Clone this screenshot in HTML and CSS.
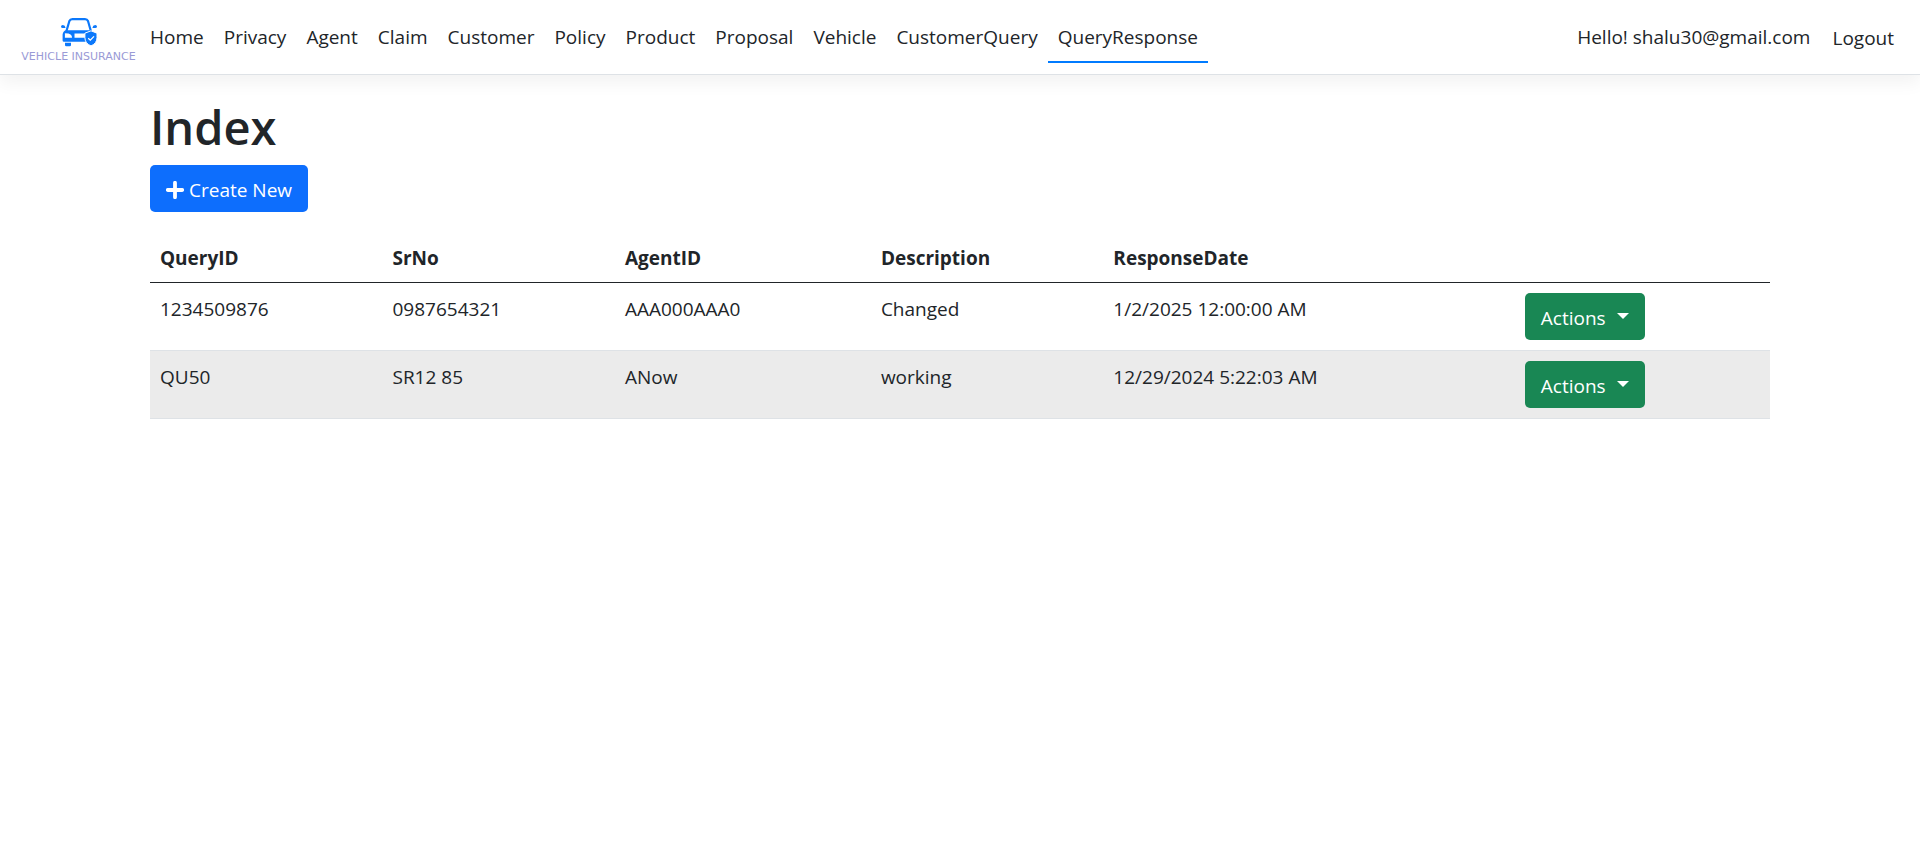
FILE: index.html
```html
<!DOCTYPE html>
<html lang="en">
<head>
<meta charset="utf-8">
<title>Index - Vehicle Insurance</title>
<link rel="stylesheet" href="styles.css">
</head>
<body>
<header class="navbar">
  <a class="brand" href="#">
    <svg class="brand-icon" viewBox="0 0 38 30" aria-hidden="true">
      <path fill="none" stroke="#0b78fb" stroke-width="2.2" stroke-linejoin="round" d="M6.300 14.500 9.400 4Q10.200 2.100 12.400 2.100H25Q27.200 2.100 28 4L31 14.500"/>
      <path fill="#0b78fb" fill-rule="evenodd" d="M6 13.200H31L33 16 27 24.800H4Q2.600 24.800 2.600 23.400V17.500Q3 14 6 13.200ZM4.900 16.200V20.700H12Q12 17.500 8.500 16.500ZM14.500 16.400V20.700H25V16.400Z"/>
      <path fill="#0b78fb" d="M5 25.800H11V28Q11 29.300 9.700 29.300H6.300Q5 29.300 5 28Z"/>
      <path fill="#0b78fb" d="M1 9.500Q1 8 2.800 8 5.200 8.200 5.600 11H2.800Q1 11 1 9.500ZM37 9.500Q37 8 35.200 8 32.800 8.200 32.400 11H35.200Q37 11 37 9.500Z"/>
      <path fill="#0b78fb" stroke="#fff" stroke-width="1" d="M31 13.800 37 16.200V20.500Q37 26.500 31 28.900 24.900 26.500 24.900 20.500V16.200Z"/>
      <path fill="none" stroke="#fff" stroke-width="1.300" d="M28.200 21.300 30.300 23.200 34 19.400"/>
    </svg>
    <span class="brand-name">VEHICLE INSURANCE</span>
  </a>
  <nav class="nav">
    <a class="nav-link" href="#">Home</a>
    <a class="nav-link" href="#">Privacy</a>
    <a class="nav-link" href="#">Agent</a>
    <a class="nav-link" href="#">Claim</a>
    <a class="nav-link" href="#">Customer</a>
    <a class="nav-link" href="#">Policy</a>
    <a class="nav-link" href="#">Product</a>
    <a class="nav-link" href="#">Proposal</a>
    <a class="nav-link" href="#">Vehicle</a>
    <a class="nav-link" href="#">CustomerQuery</a>
    <a class="nav-link active" href="#" aria-current="page">QueryResponse</a>
  </nav>
  <div class="account">
    <a class="nav-link" href="#">Hello! shalu30@gmail.com</a>
    <button class="logout" type="button">Logout</button>
  </div>
</header>
<main class="container">
  <h1 class="title">Index</h1>
  <a class="btn btn-primary" href="#">
    <svg class="plus" viewBox="0 0 18 18" aria-hidden="true"><path d="M9 1.800V16.200M1.800 9H16.200" stroke="#fff" stroke-width="3.800" stroke-linecap="round"/></svg>
    <span>Create New</span>
  </a>
  <table class="table">
    <colgroup><col class="col-narrow"><col class="col-narrow"><col class="col-mid"><col class="col-narrow"><col class="col-date"><col></colgroup>
    <thead>
      <tr><th>QueryID</th><th>SrNo</th><th>AgentID</th><th>Description</th><th>ResponseDate</th><th></th></tr>
    </thead>
    <tbody>
      <tr><td>1234509876</td><td>0987654321</td><td>AAA000AAA0</td><td>Changed</td><td>1/2/2025 12:00:00 AM</td><td><button class="btn btn-success" type="button">Actions<span class="caret"></span></button></td></tr>
      <tr><td>QU50</td><td>SR12 85</td><td>ANow</td><td>working</td><td>12/29/2024 5:22:03 AM</td><td><button class="btn btn-success" type="button">Actions<span class="caret"></span></button></td></tr>
    </tbody>
  </table>
</main>
</body>
</html>
```
FILE: styles.css
```css
* { box-sizing: border-box; }
body {
  margin: 0;
  background: #fff;
  color: #212529;
  font: 400 19px/30px "Segoe UI", "Open Sans", "Noto Sans", sans-serif;
}
a { color: inherit; text-decoration: none; }
button { font: inherit; cursor: pointer; }

.navbar {
  display: flex;
  align-items: center;
  padding: 11px 16px 11px 17px;
  border-bottom: 1px solid #dee2e6;
  box-shadow: 0 8px 16px rgba(0, 0, 0, 0.05);
}
.brand {
  display: flex;
  flex-direction: column;
  align-items: center;
  gap: 4px;
  width: 123px;
  padding-top: 5px;
}
.brand-icon { width: 38px; height: 30px; }
.brand-name {
  color: #9a9ad6;
  font: 11px/12px "DejaVu Sans", sans-serif;
  white-space: nowrap;
}
.nav { display: flex; flex: 1; }
.nav-link {
  padding: 11px 10px 9px;
  border-bottom: 2px solid transparent;
  white-space: nowrap;
}
.nav-link.active { border-bottom-color: #007bff; }
.account { display: flex; align-items: center; gap: 2px; }
.logout {
  padding: 11px 10px 9px;
  border: 0;
  background: none;
  color: inherit;
}

.container {
  max-width: 1650px;
  margin: 0 auto;
  padding: 22px 15px;
}
.title {
  margin: 0 0 8px;
  font-size: 47px;
  font-weight: 600;
  line-height: 60px;
}
.btn {
  display: inline-flex;
  align-items: center;
  padding: 10px 16px 7px;
  border: 0;
  border-radius: 5px;
  color: #fff;
}
.btn-primary { gap: 5px; background: #0d6efd; }
.btn-success { gap: 11px; background: #198754; }
.plus { width: 18px; height: 18px; }
.caret {
  margin-bottom: 5px;
  border: 6px solid transparent;
  border-top-color: #fff;
  border-bottom: 0;
}

.table {
  width: 100%;
  margin-top: 20px;
  table-layout: fixed;
  border-collapse: collapse;
}
.table th, .table td {
  padding: 11px 10px 9px;
  border-bottom: 1px solid #dee2e6;
  text-align: left;
  vertical-align: top;
}
.table th { border-bottom-color: #212529; font-weight: 700; }
.table td:last-child { padding: 10px; }
.table td .btn { vertical-align: top; }
.table tbody tr:nth-child(even) { background: #ebebeb; }
.col-narrow { width: 14.35%; }
.col-mid { width: 15.8%; }
.col-date { width: 25.4%; }
```
